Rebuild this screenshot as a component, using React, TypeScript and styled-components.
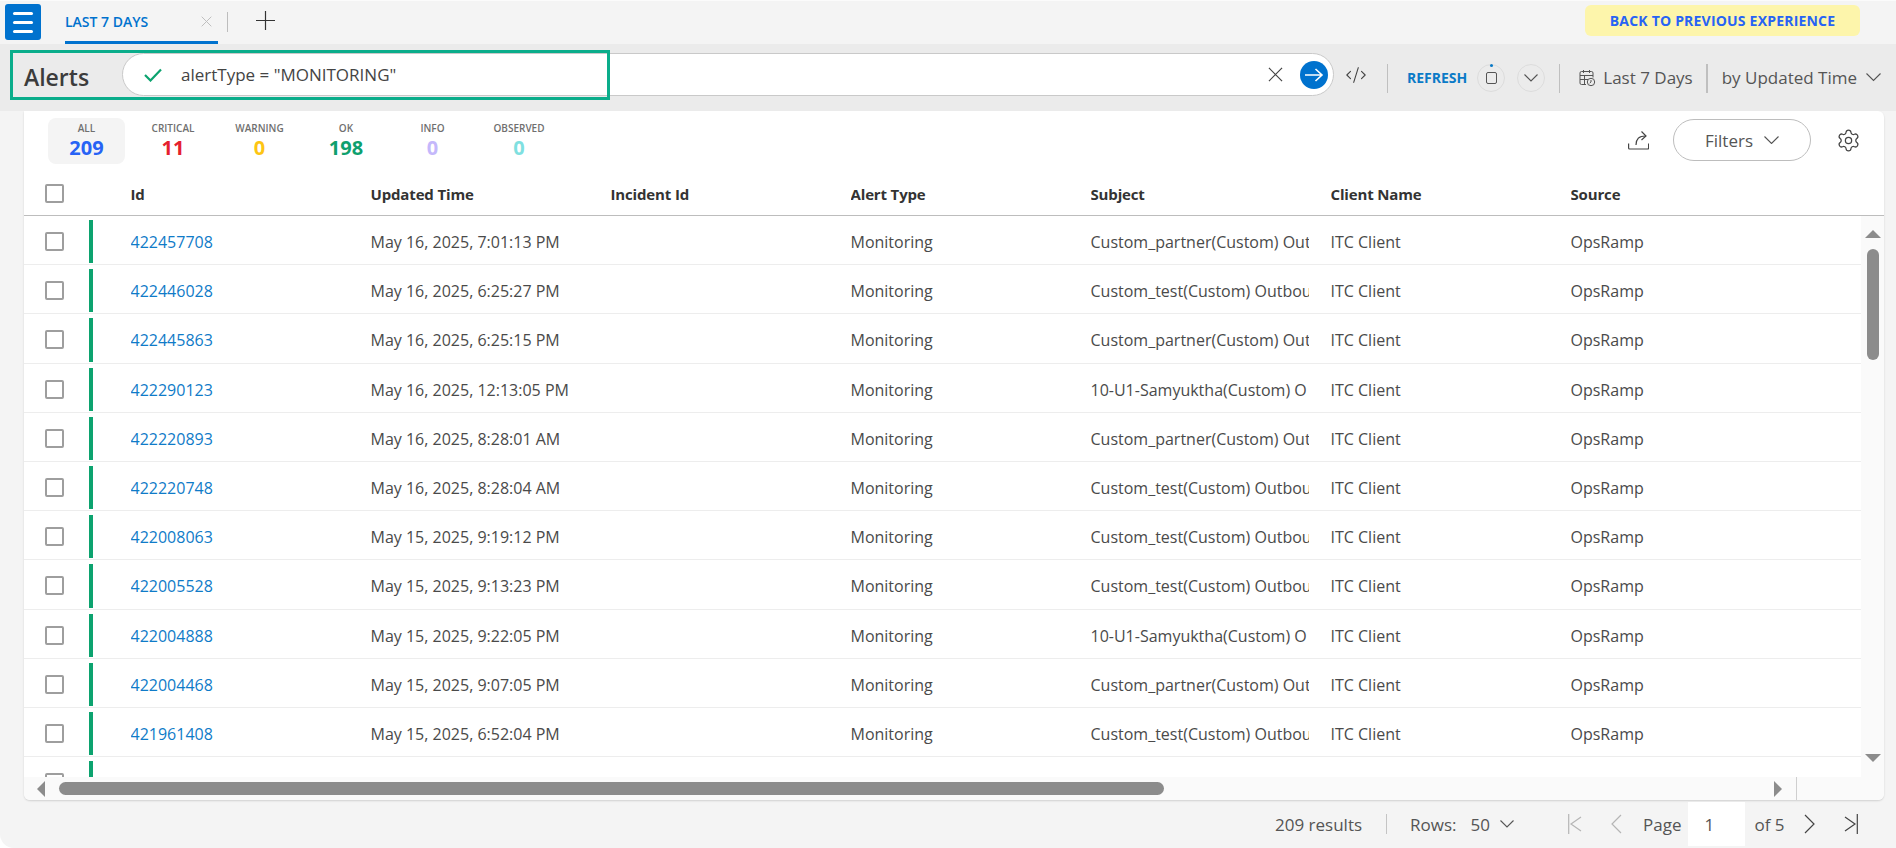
import React from "react";
import styled, { createGlobalStyle } from "styled-components";
import { CodeXml, Settings } from "lucide-react";

const GlobalStyle = createGlobalStyle`
  html, body {
    margin: 0;
    padding: 0;
    background: #ffffff;
  }
  * {
    box-sizing: border-box;
  }
`;

const Page = styled.div`
  width: 1896px;
  height: 848px;
  background: #f4f4f4;
  border-top: 1px solid #fbfbfb;
  border-bottom-left-radius: 14px;
  font-family: "Open Sans", "Liberation Sans", sans-serif;
  color: #4a4a4a;
  display: flex;
  flex-direction: column;
  overflow: hidden;
`;

const TopBar = styled.div`
  height: 43px;
  display: flex;
  align-items: flex-start;
  flex: none;
  padding-left: 5px;
`;

const MenuButton = styled.button`
  width: 36px;
  height: 36px;
  margin-top: 3px;
  background: #0072ce;
  border: none;
  border-radius: 3px;
  padding: 0 8px;
  display: flex;
  flex-direction: column;
  justify-content: center;
  gap: 6px;
`;

const MenuBar = styled.span`
  display: block;
  height: 3px;
  border-radius: 2px;
  background: #ffffff;
`;

const Tab = styled.div`
  width: 153px;
  height: 43px;
  margin-left: 24px;
  border-bottom: 3px solid #0072ce;
  display: flex;
  align-items: center;
  justify-content: space-between;
  padding-right: 6px;
  font-size: 14px;
  font-weight: 600;
  color: #0072ce;
`;

const TabDivider = styled.span`
  width: 1px;
  height: 20px;
  margin: 11px 0 0 9px;
  background: #bdbdbd;
`;

const AddTab = styled.div`
  margin: 10px 0 0 28px;
  display: flex;
`;

const BackButton = styled.button`
  margin: 4px 36px 0 auto;
  width: 275px;
  height: 31px;
  background: #fdf5ab;
  border: none;
  border-radius: 6px;
  font-family: inherit;
  font-size: 14px;
  font-weight: 700;
  letter-spacing: 0.2px;
  color: #2763f5;
`;

const Toolbar = styled.div`
  position: relative;
  height: 67px;
  flex: none;
  background: #ebebeb;
  display: flex;
  align-items: center;
  padding-left: 24px;
`;

const Highlight = styled.div`
  position: absolute;
  left: 10px;
  top: 6px;
  width: 600px;
  height: 50px;
  border: 3px solid #0bad8b;
  pointer-events: none;
`;

const Title = styled.h1`
  width: 98px;
  margin: -2px 0 0;
  font-size: 23px;
  font-weight: 600;
  color: #3c3c3c;
`;

const SearchPill = styled.div`
  width: 1212px;
  height: 43px;
  margin-top: -6px;
  background: #ffffff;
  border: 1px solid #c9c9c9;
  border-radius: 22px;
  display: flex;
  align-items: center;
  padding: 0 5px 0 21px;
  flex: none;
`;

const QueryText = styled.span`
  margin-left: 19px;
  font-size: 17px;
  color: #444444;
  flex: 1;
`;

const GoButton = styled.span`
  width: 28px;
  height: 28px;
  margin-left: 17px;
  border-radius: 50%;
  background: #0072ce;
  display: flex;
  align-items: center;
  justify-content: center;
`;

const CodeSlot = styled.span`
  margin: -6px 0 0 11px;
  display: flex;
  color: #444444;
`;

const ToolDivider = styled.span<{ $gap: number; $thick?: boolean }>`
  width: ${props => (props.$thick ? 2 : 1)}px;
  height: 29px;
  margin: 2px 0 0 ${props => props.$gap}px;
  background: #bfbfbf;
  flex: none;
`;

const RefreshLabel = styled.span`
  margin-left: 19px;
  font-size: 14px;
  font-weight: 700;
  color: #0a7ac7;
`;

const RoundButton = styled.span<{ $gap: number }>`
  position: relative;
  width: 28px;
  height: 28px;
  margin-left: ${props => props.$gap}px;
  border: 1px solid #dcdcdc;
  border-radius: 50%;
  display: flex;
  align-items: center;
  justify-content: center;
  flex: none;
`;

const StopSquare = styled.span`
  width: 11px;
  height: 12px;
  border: 1.5px solid #555555;
  border-radius: 2px;
`;

const TimerDot = styled.span`
  position: absolute;
  top: -1px;
  left: 12px;
  width: 3px;
  height: 3px;
  border-radius: 50%;
  background: #0a7ac7;
`;

const RangeLabel = styled.span<{ $gap: number }>`
  margin-left: ${props => props.$gap}px;
  font-size: 17px;
  color: #555555;
  white-space: nowrap;
`;

const IconSlot = styled.span<{ $gap: number }>`
  margin-left: ${props => props.$gap}px;
  display: flex;
`;

const Card = styled.section`
  width: 1860px;
  height: 689px;
  margin-left: 24px;
  background: #ffffff;
  border-radius: 0 6px 6px 6px;
  box-shadow: 0 1px 2px rgba(0, 0, 0, 0.15);
  display: flex;
  flex-direction: column;
  flex: none;
  overflow: hidden;
`;

const CardTop = styled.div`
  height: 61px;
  flex: none;
  display: flex;
  align-items: flex-start;
  gap: 9.5px;
  padding: 7px 23px 0 24px;
`;

const Stat = styled.div<{ $active?: boolean }>`
  width: 77px;
  height: 46px;
  border-radius: 8px;
  background: ${props => (props.$active ? "#f4f4f4" : "transparent")};
  display: flex;
  flex-direction: column;
  align-items: center;
`;

const StatLabel = styled.span`
  margin-top: 3px;
  font-size: 10px;
  line-height: 14px;
  font-weight: 600;
  color: #6f6f6f;
  white-space: nowrap;
`;

const StatValue = styled.span<{ $color: string }>`
  font-size: 20px;
  line-height: 25px;
  font-weight: 700;
  color: ${props => props.$color};
`;

const CardActions = styled.div`
  margin-left: auto;
  display: flex;
  align-items: center;
  height: 42px;
  margin-top: 1px;
  color: #444444;
`;

const FiltersButton = styled.button`
  width: 138px;
  height: 42px;
  margin: 0 25px 0 24px;
  background: #ffffff;
  border: 1px solid #bdbdbd;
  border-radius: 21px;
  font-family: inherit;
  font-size: 17px;
  color: #555555;
  display: flex;
  align-items: center;
  justify-content: center;
  gap: 11px;
`;

const columns = "106.5px repeat(6, 240px) 1fr";

const HeadRow = styled.div`
  height: 44px;
  flex: none;
  display: grid;
  grid-template-columns: ${columns};
  align-items: center;
  border-bottom: 1px solid #bdbdbd;
  font-size: 15px;
  font-weight: 700;
  letter-spacing: -0.15px;
  color: #333333;
`;

const TableBody = styled.div`
  flex: 1;
  min-height: 0;
  display: flex;
`;

const RowsViewport = styled.div`
  flex: 1;
  min-width: 0;
  overflow: hidden;
`;

const Row = styled.div`
  height: 49.2px;
  display: grid;
  grid-template-columns: ${columns};
  align-items: center;
  border-bottom: 1px solid #ededed;
  font-size: 16px;
  color: #4a4a4a;
`;

const LeadCell = styled.div`
  height: 100%;
  padding: 4px 0 1px 21px;
  display: flex;
  align-items: center;
`;

const HeadLeadCell = styled(LeadCell)`
  padding: 0 0 0 21px;
`;

const Box = styled.span`
  width: 19px;
  height: 19px;
  border: 2px solid #9e9e9e;
  border-radius: 2px;
  background: #ffffff;
  flex: none;
`;

const StatusBar = styled.span`
  width: 4px;
  height: 100%;
  margin-left: 25px;
  background: #0ca36f;
`;

const Cell = styled.div`
  min-width: 0;
  margin-right: 22px;
  overflow: hidden;
  white-space: nowrap;
`;

const BodyCell = styled(Cell)`
  margin-top: 4px;
`;

const IdLink = styled.a`
  color: #0f7bc8;
  text-decoration: none;
`;

const VerticalTrack = styled.div`
  width: 23px;
  flex: none;
  background: #fafafa;
  display: flex;
  flex-direction: column;
  align-items: center;
  padding: 14px 0 15px;
`;

const Arrow = styled.span<{ $dir: "up" | "down" | "left" | "right" }>`
  width: 0;
  height: 0;
  flex: none;
  border-style: solid;
  border-color: transparent;
  ${props =>
    props.$dir === "up" || props.$dir === "down"
      ? `border-width: ${props.$dir === "up" ? "0 8px 8px" : "8px 8px 0"};`
      : `border-width: ${props.$dir === "left" ? "8px 8px 8px 0" : "8px 0 8px 8px"};`}
  ${props => `border-${{ up: "bottom", down: "top", left: "right", right: "left" }[props.$dir]}-color: #8c8c8c;`}
`;

const VerticalThumb = styled.span`
  width: 12px;
  height: 111px;
  margin-top: 11px;
  border-radius: 6px;
  background: #8c8c8c;
`;

const DownSlot = styled.span`
  margin-top: auto;
  display: flex;
`;

const HorizontalTrack = styled.div`
  height: 23px;
  flex: none;
  background: #fafafa;
  display: flex;
  align-items: center;
  padding-left: 13px;
`;

const HorizontalThumb = styled.span`
  width: 1105px;
  height: 13px;
  margin-left: 14px;
  border-radius: 7px;
  background: #8c8c8c;
`;

const RightSlot = styled.span`
  margin-left: 610px;
  display: flex;
`;

const TrackDivider = styled.span`
  width: 1px;
  height: 23px;
  margin-left: 14px;
  background: #cfcfcf;
`;

const Footer = styled.div`
  flex: 1;
  display: flex;
  align-items: center;
  padding-left: 1275px;
  font-size: 17px;
  color: #555555;
  white-space: nowrap;
`;

const FooterDivider = styled.span`
  width: 1px;
  height: 20px;
  margin: 0 23px 0 24px;
  background: #c4c4c4;
`;

const PageInput = styled.span`
  width: 57px;
  height: 44px;
  margin: 0 9px 0 7px;
  background: #ffffff;
  padding-left: 16px;
  display: flex;
  align-items: center;
`;

const PagerIcon = styled.span<{ $gap: number }>`
  margin-left: ${props => props.$gap}px;
  display: flex;
`;

const FooterText = styled.span<{ $gap?: number }>`
  margin-left: ${props => props.$gap ?? 0}px;
`;

const Chevron = ({ width, color = "#555555" }: { width: number; color?: string }) => (
  <svg width={width} height={width / 2 + 1} viewBox={`0 0 ${width} ${width / 2 + 1}`} fill="none" stroke={color} strokeWidth="1.1">
    <path d={`M0.5 0.5 ${width / 2} ${width / 2} ${width - 0.5} 0.5`} />
  </svg>
);

const Cross = ({ size, color, stroke }: { size: number; color: string; stroke: number }) => (
  <svg width={size} height={size} viewBox="0 0 16 16" fill="none" stroke={color} strokeWidth={stroke}>
    <path d="M1 1l14 14M15 1 1 15" />
  </svg>
);

const PagerGlyph = ({ dir, edge, color }: { dir: "left" | "right"; edge?: boolean; color: string }) => {
  const width = edge ? 14 : 11;
  const points = dir === "left" ? `${edge ? 13 : 10} ${edge ? 3 : 1} ${edge ? 3 : 1} 10 ${edge ? 13 : 10} ${edge ? 17 : 19}` : `1 ${edge ? 3 : 1} ${edge ? 11 : 10} 10 1 ${edge ? 17 : 19}`;
  return (
    <svg width={width} height="20" viewBox={`0 0 ${width} 20`} fill="none" stroke={color} strokeWidth="1.2">
      <polyline points={points} />
      {edge && <path d={dir === "left" ? "M0.7 0v20" : "M13.3 0v20"} />}
    </svg>
  );
};

const CheckMark = () => (
  <svg width="18" height="14" viewBox="0 0 18 14" fill="none" stroke="#0ca36f" strokeWidth="2.2">
    <path d="M1 7l5.5 5.5L17 1.5" />
  </svg>
);

const GoArrow = () => (
  <svg width="20" height="18" viewBox="0 0 20 18" fill="none" stroke="#ffffff" strokeWidth="1.6">
    <path d="M1 9h17M11.5 3l6.5 6-6.5 6" />
  </svg>
);

const PlusMark = () => (
  <svg width="19" height="19" viewBox="0 0 19 19" fill="none" stroke="#333333" strokeWidth="1.2">
    <path d="M9.5 0v19M0 9.5h19" />
  </svg>
);

const CalendarIcon = () => (
  <svg width="17" height="18" viewBox="0 0 17 18" fill="none" stroke="#555555" strokeWidth="1">
    <path d="M7 15.5H2.5a1.5 1.5 0 0 1-1.5-1.5V4a1.5 1.5 0 0 1 1.5-1.5h10A1.5 1.5 0 0 1 14 4v4.5" />
    <path d="M4.5 1v3M10.5 1v3M1 6.5h13M1 10.5h8M5.5 6.5v9" />
    <circle cx="12" cy="13" r="3.7" />
    <path d="M12 11v2l-1.2 1" />
  </svg>
);

const ShareIcon = () => (
  <svg width="21" height="20" viewBox="0 0 21 20" fill="none" stroke="#444444" strokeWidth="1.2">
    <path d="M0.6 13.5v4.5a1 1 0 0 0 1 1h18a1 1 0 0 0 1-1v-4.5" />
    <path d="M8 15c0-6 3-9 9.5-9" />
    <path d="M13.5 1.5 18 6l-4.5 4" />
  </svg>
);

const stats = [
  { label: "ALL", value: "209", color: "#2763f5" },
  { label: "CRITICAL", value: "11", color: "#e5202e" },
  { label: "WARNING", value: "0", color: "#fdc513" },
  { label: "OK", value: "198", color: "#0ea06e" },
  { label: "INFO", value: "0", color: "#c4b8fb" },
  { label: "OBSERVED", value: "0", color: "#7fe0e0" },
];

const headers = ["Id", "Updated Time", "Incident Id", "Alert Type", "Subject", "Client Name", "Source"];

// subjects are cut by the column in the real table, only the visible part is kept here
const rows = [
  ["422457708", "May 16, 2025, 7:01:13 PM", "Custom_partner(Custom) Out"],
  ["422446028", "May 16, 2025, 6:25:27 PM", "Custom_test(Custom) Outbou"],
  ["422445863", "May 16, 2025, 6:25:15 PM", "Custom_partner(Custom) Out"],
  ["422290123", "May 16, 2025, 12:13:05 PM", "10-U1-Samyuktha(Custom) O"],
  ["422220893", "May 16, 2025, 8:28:01 AM", "Custom_partner(Custom) Out"],
  ["422220748", "May 16, 2025, 8:28:04 AM", "Custom_test(Custom) Outbou"],
  ["422008063", "May 15, 2025, 9:19:12 PM", "Custom_test(Custom) Outbou"],
  ["422005528", "May 15, 2025, 9:13:23 PM", "Custom_test(Custom) Outbou"],
  ["422004888", "May 15, 2025, 9:22:05 PM", "10-U1-Samyuktha(Custom) O"],
  ["422004468", "May 15, 2025, 9:07:05 PM", "Custom_partner(Custom) Out"],
  ["421961408", "May 15, 2025, 6:52:04 PM", "Custom_test(Custom) Outbou"],
];

export default function App() {
  return (
    <Page>
      <GlobalStyle />
      <TopBar>
        <MenuButton aria-label="Menu">
          <MenuBar />
          <MenuBar />
          <MenuBar />
        </MenuButton>
        <Tab>
          LAST 7 DAYS
          <Cross size={11} color="#bcbcbc" stroke={1.4} />
        </Tab>
        <TabDivider />
        <AddTab>
          <PlusMark />
        </AddTab>
        <BackButton>BACK TO PREVIOUS EXPERIENCE</BackButton>
      </TopBar>

      <Toolbar>
        <Highlight />
        <Title>Alerts</Title>
        <SearchPill>
          <CheckMark />
          <QueryText>alertType = "MONITORING"</QueryText>
          <Cross size={15} color="#444444" stroke={1.3} />
          <GoButton>
            <GoArrow />
          </GoButton>
        </SearchPill>
        <CodeSlot>
          <CodeXml size={22} strokeWidth={1.2} />
        </CodeSlot>
        <ToolDivider $gap={20} />
        <RefreshLabel>REFRESH</RefreshLabel>
        <RoundButton $gap={10}>
          <TimerDot />
          <StopSquare />
        </RoundButton>
        <RoundButton $gap={12}>
          <Chevron width={14} />
        </RoundButton>
        <ToolDivider $gap={14} />
        <IconSlot $gap={19}>
          <CalendarIcon />
        </IconSlot>
        <RangeLabel $gap={7}>Last 7 Days</RangeLabel>
        <ToolDivider $gap={13} $thick />
        <RangeLabel $gap={14}>by Updated Time</RangeLabel>
        <IconSlot $gap={9}>
          <Chevron width={15} />
        </IconSlot>
      </Toolbar>

      <Card>
        <CardTop>
          {stats.map((stat, index) => (
            <Stat key={stat.label} $active={index === 0}>
              <StatLabel>{stat.label}</StatLabel>
              <StatValue $color={stat.color}>{stat.value}</StatValue>
            </Stat>
          ))}
          <CardActions>
            <ShareIcon />
            <FiltersButton>
              Filters
              <Chevron width={15} />
            </FiltersButton>
            <Settings size={25} strokeWidth={1.2} />
          </CardActions>
        </CardTop>

        <HeadRow>
          <HeadLeadCell>
            <Box />
          </HeadLeadCell>
          {headers.map(header => (
            <Cell key={header}>{header}</Cell>
          ))}
        </HeadRow>

        <TableBody>
          <RowsViewport>
            {rows.map(row => (
              <Row key={row[0]}>
                <LeadCell>
                  <Box />
                  <StatusBar />
                </LeadCell>
                <BodyCell>
                  <IdLink href="#">{row[0]}</IdLink>
                </BodyCell>
                <BodyCell>{row[1]}</BodyCell>
                <BodyCell />
                <BodyCell>Monitoring</BodyCell>
                <BodyCell>{row[2]}</BodyCell>
                <BodyCell>ITC Client</BodyCell>
                <BodyCell>OpsRamp</BodyCell>
              </Row>
            ))}
            <Row>
              <LeadCell>
                <Box />
                <StatusBar />
              </LeadCell>
            </Row>
          </RowsViewport>
          <VerticalTrack>
            <Arrow $dir="up" />
            <VerticalThumb />
            <DownSlot>
              <Arrow $dir="down" />
            </DownSlot>
          </VerticalTrack>
        </TableBody>

        <HorizontalTrack>
          <Arrow $dir="left" />
          <HorizontalThumb />
          <RightSlot>
            <Arrow $dir="right" />
          </RightSlot>
          <TrackDivider />
        </HorizontalTrack>
      </Card>

      <Footer>
        <FooterText>209 results</FooterText>
        <FooterDivider />
        <FooterText>Rows:</FooterText>
        <FooterText $gap={14}>50</FooterText>
        <PagerIcon $gap={10}>
          <Chevron width={14} />
        </PagerIcon>
        <PagerIcon $gap={54}>
          <PagerGlyph dir="left" edge color="#b5b5b5" />
        </PagerIcon>
        <PagerIcon $gap={29}>
          <PagerGlyph dir="left" color="#b5b5b5" />
        </PagerIcon>
        <FooterText $gap={21}>Page</FooterText>
        <PageInput>1</PageInput>
        <FooterText>of 5</FooterText>
        <PagerIcon $gap={19}>
          <PagerGlyph dir="right" color="#444444" />
        </PagerIcon>
        <PagerIcon $gap={29}>
          <PagerGlyph dir="right" edge color="#444444" />
        </PagerIcon>
      </Footer>
    </Page>
  );
}
